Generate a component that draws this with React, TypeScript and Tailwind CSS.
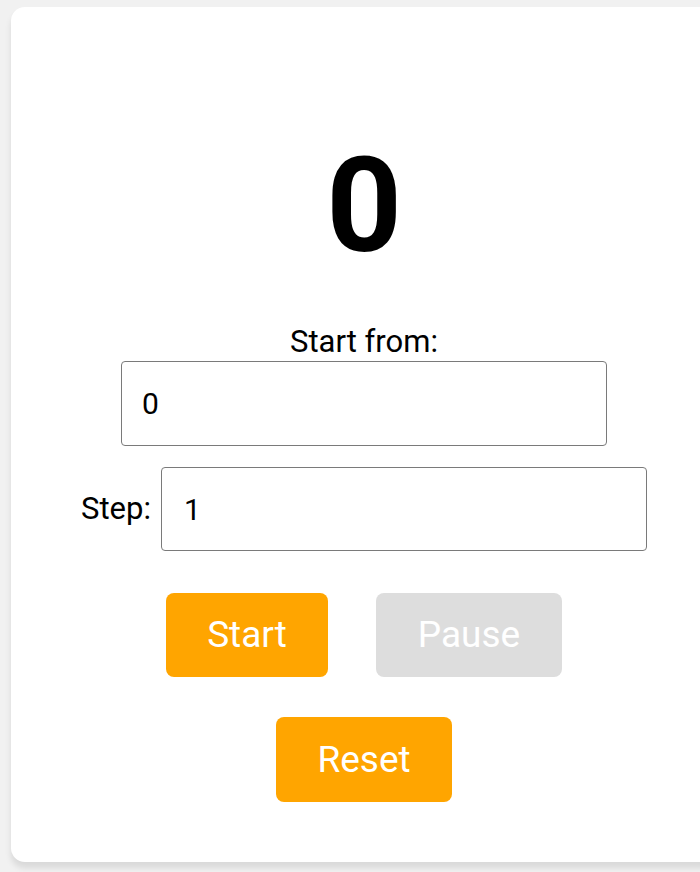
import { useState } from 'react';

const App = () => {
  const [count] = useState(0);
  const [startFrom, setStartFrom] = useState('0');
  const [step, setStep] = useState('1');

  return (
    <div
      className="h-[872px] w-[700px] overflow-hidden bg-[#f1f1f1] pt-[7px] pl-[11px]"
      style={{ fontFamily: 'Roboto, "Noto Sans", sans-serif' }}
    >
      {/* Counter card */}
      <div className="flex h-[855px] w-[706px] flex-col items-center rounded-[14px] bg-white shadow-[0_6px_6px_rgba(0,0,0,0.10)]">
        <div className="mt-[133px] text-[132px] font-bold leading-none text-black">{count}</div>

        <label className="mt-[52px] text-[31px] leading-[36px] text-black">Start from:</label>
        <input
          value={startFrom}
          onChange={(e) => setStartFrom(e.target.value)}
          className="mt-[1px] h-[85px] w-[486px] rounded-[4px] border border-[#7a7a7a] pl-[20px] text-[30px] text-black outline-none"
        />

        <div className="mt-[21px] flex items-center gap-[10px]">
          <label className="text-[31px] leading-[36px] text-black">Step:</label>
          <input
            value={step}
            onChange={(e) => setStep(e.target.value)}
            className="h-[84px] w-[486px] rounded-[4px] border border-[#7a7a7a] pl-[22px] text-[30px] text-black outline-none"
          />
        </div>

        <div className="mt-[42px] flex gap-[48px]">
          <button className="h-[84px] w-[162px] rounded-[8px] bg-[#ffa500] text-[37px] text-white">Start</button>
          <button disabled className="h-[84px] w-[186px] rounded-[8px] bg-[#dddddd] text-[37px] text-white">
            Pause
          </button>
        </div>

        <button className="mt-[40px] h-[85px] w-[176px] rounded-[8px] bg-[#ffa500] text-[37px] text-white">Reset</button>
      </div>
    </div>
  );
};

export default App;
